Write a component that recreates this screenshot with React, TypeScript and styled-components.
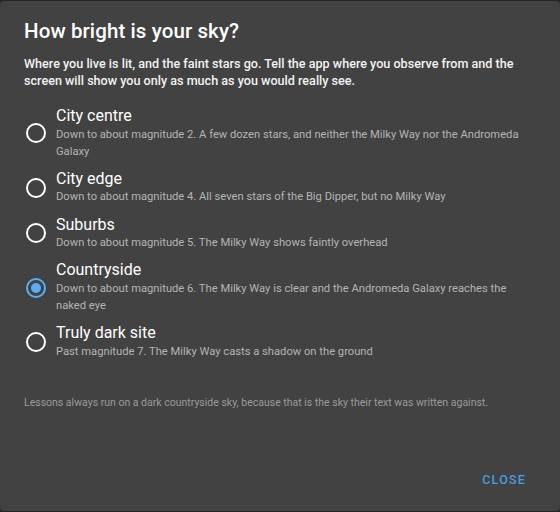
import React, { useState } from "react";
import styled, { createGlobalStyle } from "styled-components";

const Global = createGlobalStyle`
  html, body { margin: 0; padding: 0; background: #262626; }
  body { font-family: Roboto, "Noto Sans", "Liberation Sans", sans-serif; }
  * { box-sizing: border-box; }
`;

const Dialog = styled.div`
  margin-top: 1px;
  height: 510px;
  width: 560px;
  background: #424242;
  border-radius: 4px;
  display: flex;
  flex-direction: column;
  color: #fff;
`;

const Content = styled.div`
  padding: 16px 24px 0 24px;
  flex: 1;
  display: flex;
  flex-direction: column;
`;

const Title = styled.h2`
  margin: 0;
  font-size: 20.5px;
  font-weight: 500;
  line-height: 28px;
  letter-spacing: 0.1px;
`;

const Intro = styled.p`
  margin: 10px 0 0 0;
  font-size: 12.6px;
  font-weight: 500;
  line-height: 17px;
  color: #f2f2f2;
`;

const Options = styled.div`
  margin-top: 18px;
  display: flex;
  flex-direction: column;
  gap: 10.3px;
`;

const Option = styled.label`
  display: flex;
  align-items: center;
  gap: 10px;
  cursor: pointer;
`;

const RadioRing = styled.span<{ $checked: boolean }>`
  flex: none;
  width: 20px;
  height: 20px;
  margin-left: 2px;
  border-radius: 50%;
  border: 2px solid ${(p) => (p.$checked ? "#5aaff4" : "#ffffff")};
  display: flex;
  align-items: center;
  justify-content: center;
  &::after {
    content: "";
    width: 10px;
    height: 10px;
    border-radius: 50%;
    background: #5aaff4;
    display: ${(p) => (p.$checked ? "block" : "none")};
  }
`;

const Text = styled.div`
  display: flex;
  flex-direction: column;
`;

const Label = styled.span`
  font-size: 16px;
  line-height: 18.5px;
  font-weight: 400;
  color: #fff;
`;

const Desc = styled.span`
  font-size: 11.2px;
  line-height: 17px;
  color: #b4b4b4;
`;

const Note = styled.p`
  margin: 36px 0 0 0;
  font-size: 10.5px;
  line-height: 14px;
  color: #9a9a9a;
`;

const Actions = styled.div`
  display: flex;
  justify-content: flex-end;
  padding: 0 28px 18px 24px;
`;

const CloseButton = styled.button`
  background: none;
  border: none;
  padding: 6px 6px;
  font-family: Roboto, "Liberation Sans", sans-serif;
  font-size: 12.5px;
  font-weight: 500;
  letter-spacing: 1.2px;
  text-transform: uppercase;
  color: #4a9be0;
  cursor: pointer;
`;

const options = [
  {
    label: "City centre",
    desc: "Down to about magnitude 2. A few dozen stars, and neither the Milky Way nor the Andromeda Galaxy",
  },
  {
    label: "City edge",
    desc: "Down to about magnitude 4. All seven stars of the Big Dipper, but no Milky Way",
  },
  {
    label: "Suburbs",
    desc: "Down to about magnitude 5. The Milky Way shows faintly overhead",
  },
  {
    label: "Countryside",
    desc: "Down to about magnitude 6. The Milky Way is clear and the Andromeda Galaxy reaches the naked eye",
  },
  {
    label: "Truly dark site",
    desc: "Past magnitude 7. The Milky Way casts a shadow on the ground",
  },
];

export default function App() {
  const [sel, setSel] = useState(3);
  return (
    <>
      <Global />
      <Dialog>
        <Content>
          <Title>How bright is your sky?</Title>
          <Intro>
            Where you live is lit, and the faint stars go. Tell the app where you observe from and the
            screen will show you only as much as you would really see.
          </Intro>
          <Options>
            {options.map((o, i) => (
              <Option key={o.label} onClick={() => setSel(i)}>
                <RadioRing $checked={sel === i} />
                <Text>
                  <Label>{o.label}</Label>
                  <Desc>{o.desc}</Desc>
                </Text>
              </Option>
            ))}
          </Options>
          <Note>
            Lessons always run on a dark countryside sky, because that is the sky their text was written against.
          </Note>
        </Content>
        <Actions>
          <CloseButton>Close</CloseButton>
        </Actions>
      </Dialog>
    </>
  );
}
